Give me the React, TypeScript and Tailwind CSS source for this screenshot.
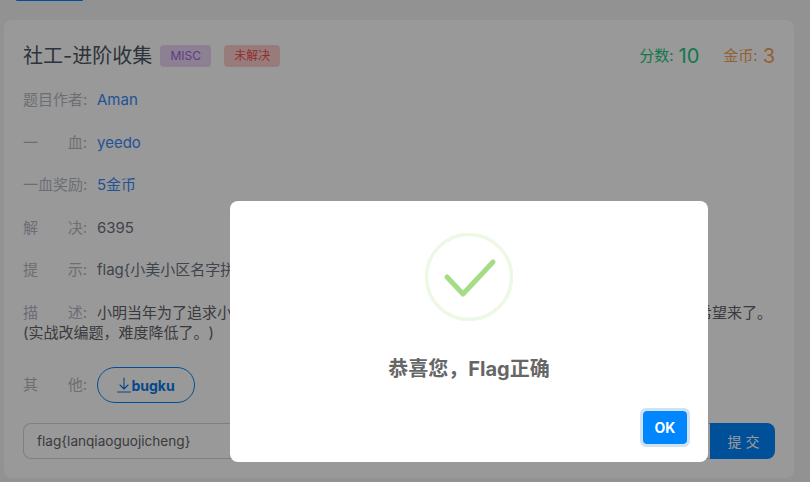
const FONT = "font-['Inter','Noto_Sans_CJK_SC',sans-serif]";

function Label({ chars }: { chars: string[] }) {
  return (
    <span className="flex w-[64px] shrink-0 justify-between text-[#b4b8c4]">
      {chars.map((c, i) => (
        <span key={i}>{c}</span>
      ))}
    </span>
  );
}

function Row({ chars, children, className }: { chars: string[]; children: React.ReactNode; className: string }) {
  return (
    <div className={`flex h-[20px] items-center gap-[10px] ${className}`}>
      <Label chars={chars} />
      {children}
    </div>
  );
}

function SuccessDialog() {
  return (
    <div className="fixed inset-0 bg-black/40">
      <div className="absolute left-[230px] top-[201px] flex h-[261px] w-[478px] flex-col items-center rounded-lg bg-white">
        <div className="mt-[32px] h-[88px] w-[88px]">
          <svg width="88" height="88" viewBox="0 0 88 88" fill="none">
            <circle cx="44" cy="44" r="42.5" stroke="#a5dc86" strokeOpacity="0.2" strokeWidth="3.5" />
            <path d="M22 44 L38 61 L68 29" stroke="#a5dc86" strokeWidth="5" strokeLinecap="round" strokeLinejoin="round" />
          </svg>
        </div>
        <h2 className="mt-[36px] text-[20px] leading-[24px] font-bold text-[#666666]">{"恭喜您\uFF0CFlag正确"}</h2>
        <div className="mt-auto mr-[18px] mb-[15px] self-end rounded-[6px] border-[3px] border-[#cfe2f2] bg-white">
          <button className="block h-[33px] w-[44px] rounded-[4px] bg-[#0086ff] text-[14px] font-bold text-white">OK</button>
        </div>
      </div>
    </div>
  );
}

export default function App() {
  return (
    <div className={`h-[482px] w-[810px] overflow-hidden bg-[#f3f4f6] text-[15px] ${FONT}`}>
      <div className="ml-[16px] h-[1px] w-[67px] rounded-b bg-[#0086ff]" />
      <div className="mx-[4px] mt-[19px] h-[458px] w-[790px] rounded-lg bg-white px-[19px] pt-[22px]">
        <div className="flex h-[28px] items-center">
          <h1 className="text-[20px] leading-[28px] text-[#4b5563]">社工-进阶收集</h1>
          <span className="ml-[8px] flex h-[22px] w-[51px] items-center justify-center rounded bg-[#e9d5f5] text-[12px] text-[#a064dc]">MISC</span>
          <span className="ml-[13px] flex h-[22px] w-[56px] items-center justify-center rounded bg-[#fdcfcf] text-[12px] text-[#f04f4f]">未解决</span>
          <div className="ml-auto flex items-center">
            <span className="text-[15px] text-[#22c77f]">分数:</span>
            <span className="ml-[5px] text-[20px] leading-[28px] text-[#22c77f]">10</span>
            <span className="ml-[24px] text-[15px] text-[#f5a05a]">金币:</span>
            <span className="ml-[5px] text-[20px] leading-[28px] text-[#f5a05a]">3</span>
          </div>
        </div>
        <Row chars={["题", "目", "作", "者:"]} className="mt-[20px]">
          <span className="text-[#3b8af8]">Aman</span>
        </Row>
        <Row chars={["一", "血:"]} className="mt-[23px]">
          <span className="text-[#3b8af8]">yeedo</span>
        </Row>
        <Row chars={["一", "血", "奖", "励:"]} className="mt-[22px]">
          <span className="text-[#3b8af8]">5金币</span>
        </Row>
        <Row chars={["解", "决:"]} className="mt-[23px]">
          <span className="text-[#6b7280]">6395</span>
        </Row>
        <Row chars={["提", "示:"]} className="mt-[22px]">
          <span className="text-[#6b7280]">flag{"{"}小美小区名字拼音{"}"}</span>
        </Row>
        <div className="mt-[23px] leading-[20px] text-[#5f6368] [text-spacing-trim:space-all]">
          <div className="flex items-center gap-[10px]">
            <Label chars={["描", "述:"]} />
            <span className="whitespace-nowrap">{"小明当年为了追求小美\uFF0C费尽心思也没能打听到她住在哪个小区\uFF0C直到今天终于有了线索\uFF0C希望来了。"}</span>
          </div>
          <div>{"(实战改编题\uFF0C难度降低了。)"}</div>
        </div>
        <div className="mt-[24px] flex h-[36px] items-center gap-[10px]">
          <Label chars={["其", "他:"]} />
          <button className="flex h-[36px] w-[98px] items-center justify-center rounded-full border border-[#0086ff] text-[14px] font-bold text-[#0a78e8]">
            <svg width="14" height="16" viewBox="0 0 14 16" fill="none" stroke="#0a78e8" strokeWidth="1.1" strokeLinecap="round" strokeLinejoin="round">
              <path d="M7 1 V12 M3 8 L7 12 L11 8 M0.5 15 H13.5" />
            </svg>
            bugku
          </button>
        </div>
        <div className="mt-[20px] flex h-[36px]">
          <input
            readOnly
            value="flag{lanqiaoguojicheng}"
            className="h-[36px] min-w-0 flex-1 rounded-l-lg border border-r-0 border-[#d1d5db] px-[13px] text-[13.6px] text-[#5f6368] outline-none"
          />
          <button className="h-[36px] w-[65px] rounded-r-lg bg-[#0086ff] pl-[6px] text-[14px] tracking-[4px] text-white">提交</button>
        </div>
      </div>
      <SuccessDialog />
    </div>
  );
}
